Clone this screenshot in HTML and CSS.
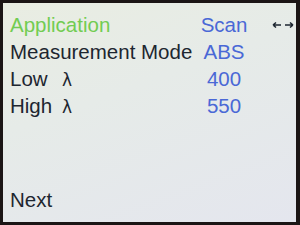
FILE: index.html
```html
<!DOCTYPE html>
<html lang="en">
<head>
  <meta charset="UTF-8">
  <title>Setup</title>
  <link rel="stylesheet" href="styles.css">
</head>
<body>
  <div class="screen">
    <div class="menu">
      <div class="row active">
        <span class="label">Application</span>
        <span class="value">Scan</span>
        <span class="arrow">
          <svg width="22" height="8" viewBox="0 0 22 8">
            <path d="M1 4H9M1 4L4 1.5M1 4L4 6.5M13 4H21M21 4L18 1.5M21 4L18 6.5" stroke="#1d2630" stroke-width="1.6" fill="none"/>
          </svg>
        </span>
      </div>
      <div class="row">
        <span class="label">Measurement Mode</span>
        <span class="value">ABS</span>
        <span class="arrow"></span>
      </div>
      <div class="row">
        <span class="label"><span class="word">Low</span><span class="lambda">&lambda;</span></span>
        <span class="value">400</span>
        <span class="arrow"></span>
      </div>
      <div class="row">
        <span class="label"><span class="word">High</span><span class="lambda">&lambda;</span></span>
        <span class="value">550</span>
        <span class="arrow"></span>
      </div>
    </div>
    <div class="footer">Next</div>
  </div>
</body>
</html>
```
FILE: styles.css
```css
body {
  margin: 0;
  width: 300px;
  height: 225px;
  background-color: #1b1515;
  font-family: 'Liberation Sans', Arial, sans-serif;
  overflow: hidden;
}

.screen {
  margin: 3px 4px 3px 3px;
  height: 219px;
  background: linear-gradient(160deg, #e9ede2 0%, #e6ebe8 40%, #e4e6ee 100%);
  display: flex;
  flex-direction: column;
  padding-left: 7px;
  box-sizing: border-box;
  color: #1d2630;
}

.menu {
  padding-top: 8px;
}

.row {
  display: grid;
  grid-template-columns: 184px 60px 1fr;
  align-items: center;
  height: 27px;
  font-size: 20.5px;
}

.row.active .label {
  color: #72cc52;
}

.word {
  display: inline-block;
  width: 52px;
}

.value {
  text-align: center;
  color: #4a68d6;
}

.lambda {
  font-family: 'DejaVu Sans', sans-serif;
  font-size: 17px;
}

.arrow {
  display: flex;
  justify-content: flex-end;
  padding-right: 2px;
}

.footer {
  margin-top: auto;
  margin-bottom: 10px;
  font-size: 20.5px;
}
```
